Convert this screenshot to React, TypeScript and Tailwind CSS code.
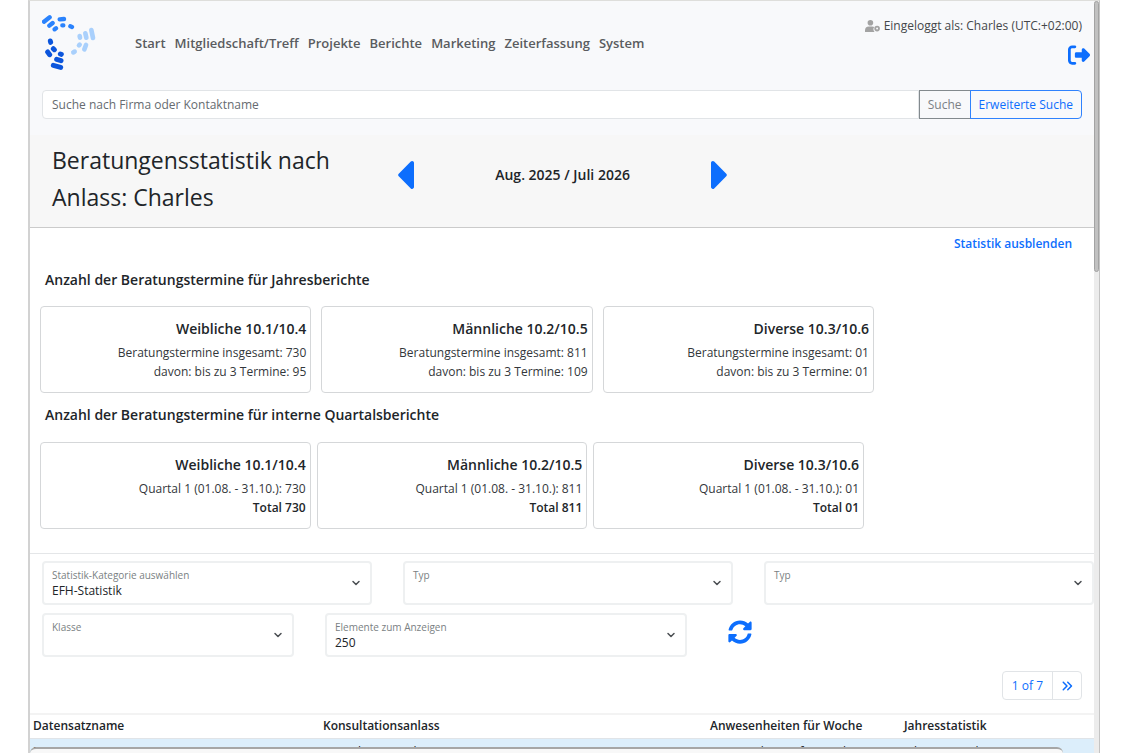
import { useId } from "react";
import { FaCaretLeft, FaCaretRight, FaSyncAlt } from "react-icons/fa";
import { FaAnglesRight, FaRightFromBracket } from "react-icons/fa6";
import { ChevronDown } from "lucide-react";

const NAV_ITEMS = ["Start", "Mitgliedschaft/Treff", "Projekte", "Berichte", "Marketing", "Zeiterfassung", "System"];

const YEAR_STATS = [
  { title: "Weibliche 10.1/10.4", total: "730", short: "95" },
  { title: "Männliche 10.2/10.5", total: "811", short: "109" },
  { title: "Diverse 10.3/10.6", total: "01", short: "01" },
];

const QUARTER_STATS = [
  { title: "Weibliche 10.1/10.4", total: "730" },
  { title: "Männliche 10.2/10.5", total: "811" },
  { title: "Diverse 10.3/10.6", total: "01" },
];

const COLUMNS = ["Datensatzname", "Konsultationsanlass", "Anwesenheiten für Woche", "Jahresstatistik"];

function Logo() {
  return (
    <svg viewBox="35 27 162 168" className="h-14 w-[54px]" fill="none" strokeLinecap="round" role="img" aria-label="Logo">
      <g stroke="#2b83fd" strokeWidth="13">
        <path d="M41 50 58 37M57 62 67 54M73 73 77 70M88 43 101 42M96 61 99 61M120 64 125 66" />
      </g>
      <g stroke="#a9d0fc" strokeWidth="14">
        <path d="M148 93 149 98M165 85 168 98M183 75 188 99M146 121 148 119M167 120 162 133M129 142 133 140" />
      </g>
      <g stroke="#0b55dc" strokeWidth="15">
        <path d="M60 108 61 112M69 131 72 134M52 141 58 149M90 147 93 148M79 163 92 167M69 181 91 187" />
      </g>
    </svg>
  );
}

function UserBadgeIcon() {
  return (
    <svg viewBox="0 0 15 12" className="h-3 w-[15px]" fill="#a3a3a3" aria-hidden="true">
      <circle cx="5.4" cy="2.8" r="2.8" />
      <path d="M0 12v-1.4a4 4 0 0 1 4-4h3.2c.8 0 1.5.2 2 .5A3.9 3.9 0 0 0 9.6 12Z" />
      <circle cx="12.1" cy="8.6" r="1.9" fill="none" stroke="#a3a3a3" strokeWidth="1.8" />
    </svg>
  );
}

function StatCard({ title, children }: { title: string; children: React.ReactNode }) {
  return (
    <div className="h-[87px] flex-1 rounded border border-[#d5d7d9] px-1 pt-3 text-right text-xs leading-[19px] text-[#33373b]">
      <h3 className="mb-1 text-sm leading-5 font-semibold text-[#212529]">{title}</h3>
      {children}
    </div>
  );
}

function FloatingSelect({ label, value = "" }: { label: string; value?: string }) {
  const id = useId();
  return (
    <div className="relative">
      <select
        id={id}
        defaultValue={value}
        className="h-11 w-full appearance-none rounded border-2 border-[#eef0f1] bg-white px-2 pt-4 text-xs text-[#212529]"
      >
        <option value={value}>{value}</option>
      </select>
      <label htmlFor={id} className="pointer-events-none absolute top-2 left-[10px] text-[10px] leading-3 text-[#7a7f83]">
        {label}
      </label>
      <ChevronDown className="pointer-events-none absolute top-4 right-[10px] size-3 text-[#4b4f53]" strokeWidth={3} />
    </div>
  );
}

export default function App() {
  return (
    <div className="h-screen overflow-hidden bg-white px-7 font-['Open_Sans','Noto_Sans',sans-serif] text-xs text-[#212529]">
      <div className="relative flex h-full border-t border-r border-l-2 border-[#c4c4c4] border-t-[#dededb] border-l-[#d2d2d2]">
        <div className="min-w-0 flex-1 overflow-hidden">
          <header className="bg-[#f8f9fb] pr-3 pb-4 pl-3">
            <div className="flex h-[89px] items-start justify-between">
              <div className="flex items-start pt-[13px]">
                <a href="#start">
                  <Logo />
                </a>
                <nav className="mt-[19px] ml-[39px] flex gap-[9px] text-[13px] leading-5 font-semibold text-[#5a5c5f]">
                  {NAV_ITEMS.map((item) => (
                    <a key={item} href={`#${item}`}>
                      {item}
                    </a>
                  ))}
                </nav>
              </div>
              <div className="flex flex-col items-end pt-4">
                <div className="flex items-center gap-1 text-xs leading-[18px] text-[#44474a]">
                  <UserBadgeIcon />
                  Eingeloggt als: Charles (UTC:+02:00)
                </div>
                <button type="button" aria-label="Abmelden" className="mt-[9px] -mr-2 text-[#0d6efd]">
                  <FaRightFromBracket className="size-[22px]" />
                </button>
              </div>
            </div>
            <form className="flex h-[29px]">
              <input
                type="text"
                aria-label="Suche nach Firma oder Kontaktname"
                placeholder="Suche nach Firma oder Kontaktname"
                className="min-w-0 flex-1 rounded-l border border-[#e1e4e7] bg-white px-[9px] placeholder:text-[#666b70]"
              />
              <button type="button" className="border border-[#838a8e] px-2 text-[#7b8186]">
                Suche
              </button>
              <button type="button" className="-ml-px rounded-r border border-[#2f82fd] px-2 text-[#0d6efd]">
                Erweiterte Suche
              </button>
            </form>
          </header>

          <section className="flex h-[93px] items-center border-b border-[#cbcbcb] bg-[#f7f7f7] pb-1 pl-[22px]">
            <h1 className="w-[33%] pr-14 text-[23px] leading-[37px]">Beratungensstatistik nach Anlass: Charles</h1>
            <div className="flex w-[32%] items-center justify-between pb-2 text-sm font-semibold">
              <button type="button" aria-label="Vorheriger Zeitraum" className="text-[#0d6efd]">
                <FaCaretLeft className="h-12 w-[18px]" />
              </button>
              Aug. 2025 / Juli 2026
              <button type="button" aria-label="Nächster Zeitraum" className="text-[#0d6efd]">
                <FaCaretRight className="h-12 w-[18px]" />
              </button>
            </div>
          </section>

          <section className="border-b border-[#e4e6e8] pb-6">
            <div className="flex h-8 items-center justify-end pr-[22px]">
              <button type="button" className="font-semibold text-[#0d6efd]">
                Statistik ausblenden
              </button>
            </div>
            <h2 className="mt-[10px] mb-4 pl-[15px] text-sm leading-5 font-semibold">Anzahl der Beratungstermine für Jahresberichte</h2>
            <div className="flex gap-[10px] pr-[220px] pl-[10px]">
              {YEAR_STATS.map((s) => (
                <StatCard key={s.title} title={s.title}>
                  <p>Beratungstermine insgesamt: {s.total}</p>
                  <p>davon: bis zu 3 Termine: {s.short}</p>
                </StatCard>
              ))}
            </div>
            <h2 className="mt-3 mb-[17px] pl-[15px] text-sm leading-5 font-semibold">
              Anzahl der Beratungstermine für interne Quartalsberichte
            </h2>
            <div className="flex gap-[6px] pr-[230px] pl-[10px]">
              {QUARTER_STATS.map((s) => (
                <StatCard key={s.title} title={s.title}>
                  <p>Quartal 1 (01.08. - 31.10.): {s.total}</p>
                  <p className="font-semibold text-[#212529]">Total {s.total}</p>
                </StatCard>
              ))}
            </div>
          </section>

          <form className="flex flex-col gap-2 pt-[7px] pl-3">
            <div className="grid grid-cols-3 gap-[31px]">
              <FloatingSelect label="Statistik-Kategorie auswählen" value="EFH-Statistik" />
              <FloatingSelect label="Typ" />
              <FloatingSelect label="Typ" />
            </div>
            <div className="grid grid-cols-[252fr_362fr_376fr] gap-[31px]">
              <FloatingSelect label="Klasse" />
              <FloatingSelect label="Elemente zum Anzeigen" value="250" />
              <button type="button" aria-label="Aktualisieren" className="mt-[7px] ml-[10px] h-6 w-6 text-[#0d6efd]">
                <FaSyncAlt className="size-6" />
              </button>
            </div>
          </form>

          <div className="flex justify-end pt-[14px] pr-3 pb-[13px]">
            <div className="flex h-[29px] rounded border border-[#e1e4e7] text-[#0d6efd]">
              <span className="px-[9px] leading-7">1 of 7</span>
              <button type="button" aria-label="Nächste Seite" className="border-l border-[#e1e4e7] px-2">
                <FaAnglesRight className="size-3" />
              </button>
            </div>
          </div>

          <table className="w-full table-fixed border-t-2 border-[#f3f3f3] text-left">
            <colgroup>
              <col className="w-[290px]" />
              <col className="w-[387px]" />
              <col className="w-[194px]" />
              <col />
            </colgroup>
            <thead>
              <tr className="border-b border-[#e0e4e8]">
                {COLUMNS.map((c) => (
                  <th key={c} className="h-6 px-[3px] font-semibold whitespace-nowrap">
                    {c}
                  </th>
                ))}
              </tr>
            </thead>
            <tbody>
              <tr className="bg-[#dceefb]">
                {COLUMNS.map((c) => (
                  <td key={c} className="h-7 px-[3px] whitespace-nowrap">
                    {c}
                  </td>
                ))}
              </tr>
            </tbody>
          </table>
        </div>

        <div className="w-[5px] bg-[#ececec]">
          <div className="h-[36%] rounded-full border border-[#a3a3a3] bg-[#c1c1c1]" />
        </div>

        <div className="absolute right-9 bottom-0 left-0 h-[6px] rounded-t-lg border-t-2 border-[#a6a6a6] bg-[#f8f8f8]" />
      </div>
    </div>
  );
}
